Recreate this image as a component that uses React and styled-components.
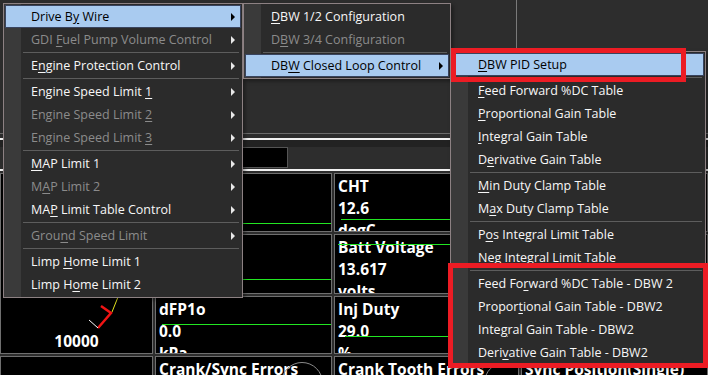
import React from "react";
import styled, { createGlobalStyle } from "styled-components";

const GlobalStyle = createGlobalStyle`
  html, body {
    margin: 0;
    padding: 0;
    background: #2d2d2d;
  }
  body {
    width: 708px;
    height: 375px;
    overflow: hidden;
    font-family: "Open Sans", "Noto Sans", sans-serif;
  }
`;

const Screen = styled.div`
  position: relative;
  width: 708px;
  height: 375px;
  background: #2d2d2d;
  display: flex;
  flex-direction: column;
  overflow: hidden;
`;

const TopPane = styled.div`
  height: 134px;
  flex: none;
  display: flex;
  border-bottom: 1px solid #6b6b6b;
  box-sizing: border-box;
`;

const TopLeft = styled.div`
  width: 517px;
  border-right: 1px solid #7a7a7a;
  box-sizing: border-box;
`;

const Rule = styled.div`
  flex: none;
  height: 2px;
  margin-top: ${(p) => p.$gap || 0}px;
  background: #f2f2f2;
`;

const Band = styled.div`
  flex: none;
  height: 7px;
  background: #222;
`;

const Toolbar = styled.div`
  flex: none;
  height: 22px;
  display: flex;
  padding-left: 200px;
`;

const ToolBox = styled.div`
  width: 88px;
  height: 21px;
  background: #000;
  border: 1px solid #555;
  box-sizing: border-box;
`;

const Grid = styled.div`
  flex: 1;
  margin-top: 2px;
  display: grid;
  grid-template-columns: 153px 177px 185px 1fr;
  grid-template-rows: 59px 60px 58px 1fr;
  gap: 2px;
`;

const Panel = styled.div`
  position: relative;
  background: #000;
  border: 1px solid #6f6f6f;
  padding: 1px 3px;
  color: #fff;
  font-family: "Open Sans", "Noto Sans", sans-serif;
  font-weight: 700;
  font-size: 15.5px;
  line-height: 22px;
  overflow: hidden;
  white-space: nowrap;
  grid-column: ${(p) => p.$col || "auto"};
  grid-row: ${(p) => p.$row || "auto"};
`;

const GaugePanel = styled(Panel)`
  display: flex;
  flex-direction: column;
  justify-content: flex-end;
  align-items: center;
  padding-bottom: 1px;
`;

const GaugeArt = styled.svg`
  position: absolute;
  left: 0;
  top: 0;
`;

const Bar = styled.div`
  position: absolute;
  left: ${(p) => p.$left}px;
  right: 0;
  top: ${(p) => p.$top}px;
  height: 1px;
  background: #22e622;
`;

const Dial = styled.div`
  position: absolute;
  top: 5px;
  right: ${(p) => p.$right}px;
  width: 40px;
  height: 40px;
  border-radius: 50%;
  border: 1px solid #8a8a8a;
`;

/* menus */

const Menu = styled.div`
  position: absolute;
  left: ${(p) => p.$x}px;
  top: ${(p) => p.$y}px;
  width: ${(p) => p.$w}px;
  box-sizing: border-box;
  border: 1px solid #8d8183;
  padding: 1px;
  background: linear-gradient(90deg, #3a3a3a 17px, #2b2b2b 17px);
  box-shadow: 2px 2px 4px rgba(0, 0, 0, 0.4);
  font-family: "Open Sans", "Noto Sans", sans-serif;
  font-size: 12.5px;
`;

const Item = styled.div`
  height: 23px;
  box-sizing: border-box;
  display: flex;
  align-items: center;
  padding-left: 25px;
  border: 1px solid ${(p) => (p.$active ? "#39445f" : "transparent")};
  background: ${(p) => (p.$active ? "#a9cbf0" : "transparent")};
  color: ${(p) => (p.$active ? "#000" : p.$disabled ? "#8b8b8b" : "#f7f7f7")};
  white-space: nowrap;
`;

const Key = styled.span`
  text-decoration: underline;
  text-underline-offset: 2px;
`;

const Arrow = styled.span`
  margin-left: auto;
  margin-right: 5px;
  width: 0;
  height: 0;
  border-top: 4px solid transparent;
  border-bottom: 4px solid transparent;
  border-left: 4px solid ${(p) => (p.$active ? "#000" : "#e8e8e8")};
`;

const Separator = styled.div`
  height: 3px;
  display: flex;
  align-items: center;
  padding-left: 18px;
  padding-right: 2px;
  &::after {
    content: "";
    flex: 1;
    height: 1px;
    background: #5d5d5d;
  }
`;

const Callout = styled.div`
  position: absolute;
  left: ${(p) => p.$x}px;
  top: ${(p) => p.$y}px;
  width: ${(p) => p.$w}px;
  height: ${(p) => p.$h}px;
  box-sizing: border-box;
  border: 5px solid #ec1c24;
`;

const menu1 = [
  { t: "Drive B&y Wire", sub: true, active: true },
  { t: "GDI &Fuel Pump Volume Control", sub: true, off: true },
  "-",
  { t: "E&ngine Protection Control", sub: true },
  "-",
  { t: "Engine Speed Limit &1", sub: true },
  { t: "Engine Speed Limit &2", sub: true, off: true },
  { t: "Engine Speed Limit &3", sub: true, off: true },
  "-",
  { t: "&MAP Limit 1", sub: true },
  { t: "M&AP Limit 2", sub: true, off: true },
  { t: "MA&P Limit Table Control", sub: true },
  "-",
  { t: "Grou&nd Speed Limit", sub: true, off: true },
  "-",
  { t: "Limp &Home Limit 1" },
  { t: "Limp H&ome Limit 2" },
];

const menu2 = [
  { t: "&DBW 1/2 Configuration" },
  { t: "D&BW 3/4 Configuration", off: true },
  "-",
  { t: "DB&W Closed Loop Control", sub: true, active: true },
];

const menu3 = [
  { t: "&DBW PID Setup", active: true },
  "-",
  { t: "&Feed Forward %DC Table" },
  { t: "&Proportional Gain Table" },
  { t: "&Integral Gain Table" },
  { t: "D&erivative Gain Table" },
  "-",
  { t: "&Min Duty Clamp Table" },
  { t: "M&ax Duty Clamp Table" },
  "-",
  { t: "P&os Integral Limit Table" },
  { t: "N&eg Integral Limit Table" },
  "-",
  { t: "Feed Fo&rward %DC Table - DBW 2" },
  { t: "Propor&tional Gain Table - DBW2" },
  { t: "Inte&gral Gain Table - DBW2" },
  { t: "Deri&vative Gain Table - DBW2" },
];

function Label({ text }) {
  const i = text.indexOf("&");
  if (i < 0) return <span>{text}</span>;
  return (
    <span>
      {text.slice(0, i)}
      <Key>{text[i + 1]}</Key>
      {text.slice(i + 2)}
    </span>
  );
}

function PopupMenu({ items, x, y, w }) {
  return (
    <Menu $x={x} $y={y} $w={w}>
      {items.map((it, i) =>
        it === "-" ? (
          <Separator key={i} />
        ) : (
          <Item key={i} $active={it.active} $disabled={it.off}>
            <Label text={it.t} />
            {it.sub && <Arrow $active={it.active} />}
          </Item>
        )
      )}
    </Menu>
  );
}

function Readout({ col, row, lines, bar }) {
  return (
    <Panel $col={col} $row={row}>
      {lines.map((l, i) => (
        <div key={i}>{l}</div>
      ))}
      {bar && <Bar $left={bar[0]} $top={bar[1]} />}
    </Panel>
  );
}

export default function App() {
  return (
    <Screen>
      <GlobalStyle />
      <TopPane>
        <TopLeft />
      </TopPane>
      <Rule $gap={4} />
      <Band />
      <Toolbar>
        <ToolBox />
      </Toolbar>
      <Rule />
      <Grid>
        <GaugePanel $col="1" $row="1 / 4">
          <GaugeArt width="153" height="181">
            <line x1="117" y1="123" x2="111" y2="138" stroke="#e6e61e" strokeWidth="1" />
            <polyline points="100,132 110,139 97,154" fill="none" stroke="#f01414" strokeWidth="2.5" />
            <line x1="88" y1="146" x2="97" y2="154" stroke="#ffffff" strokeWidth="1" />
          </GaugeArt>
          <div>10000</div>
        </GaugePanel>
        <Readout col="2" row="1" lines={[]} bar={[6, 49]} />
        <Readout col="3" row="1" lines={["CHT", "12.6", "degC"]} bar={[6, 45]} />
        <Readout col="4" row="1" lines={[]} />
        <Readout col="2" row="2" lines={[]} bar={[6, 44]} />
        <Readout col="3" row="2" lines={["Batt Voltage", "13.617", "volts"]} bar={[3, 9]} />
        <Readout col="4" row="2" lines={[]} />
        <Readout col="2" row="3" lines={["dFP1o", "0.0", "kPa"]} bar={[6, 27]} />
        <Readout col="3" row="3" lines={["Inj Duty", "29.0", "%"]} bar={[10, 39]} />
        <Readout col="4" row="3" lines={[]} />
        <Readout col="1" row="4" lines={[]} />
        <Panel $col="2" $row="4">
          Crank/Sync Errors
          <Dial $right={8} />
        </Panel>
        <Panel $col="3" $row="4">
          Crank Tooth Errors
          <Dial $right={-8} />
        </Panel>
        <Panel $col="4" $row="4">
          Sync Position(Single)
        </Panel>
      </Grid>

      <PopupMenu items={menu1} x={3} y={3} w={240} />
      <PopupMenu items={menu2} x={243} y={3} w={208} />
      <PopupMenu items={menu3} x={450} y={51} w={256} />

      <Callout $x={451} $y={48} $w={235} $h={34} />
      <Callout $x={448} $y={263} $w={260} $h={105} />
    </Screen>
  );
}
